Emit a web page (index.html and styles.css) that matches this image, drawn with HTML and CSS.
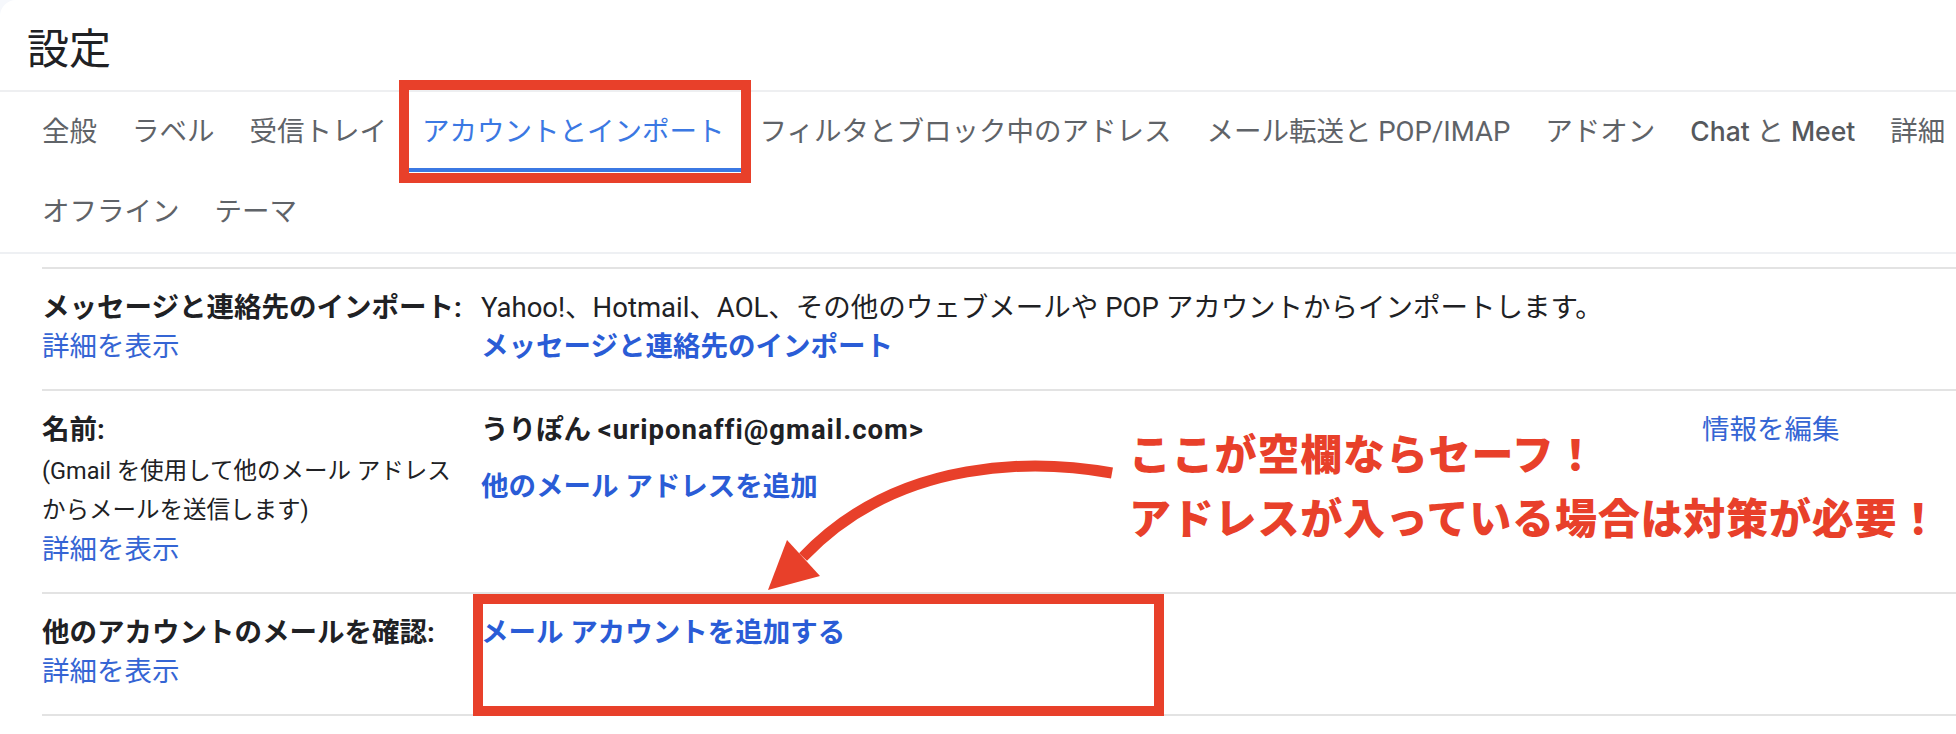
FILE: index.html
```html
<!DOCTYPE html>
<html lang="ja">
<head>
  <meta charset="UTF-8">
  <meta name="viewport" content="width=device-width, initial-scale=1.0">
  <title>設定 - アカウントとインポート</title>
  <link rel="stylesheet" href="styles.css">
</head>
<body>
  <div class="page">
    <div class="header">設定</div>

    <div class="tabs">
      <div class="tab-row">
        <div class="tab">全般</div>
        <div class="tab">ラベル</div>
        <div class="tab">受信トレイ</div>
        <div class="tab active">アカウントとインポート</div>
        <div class="tab">フィルタとブロック中のアドレス</div>
        <div class="tab">メール転送と POP/IMAP</div>
        <div class="tab">アドオン</div>
        <div class="tab"><span class="latin">Chat</span> と <span class="latin">Meet</span></div>
        <div class="tab">詳細</div>
      </div>
      <div class="tab-row">
        <div class="tab">オフライン</div>
        <div class="tab">テーマ</div>
      </div>
    </div>

    <div class="settings">
      <div class="setting-row">
        <div class="label">
          <div class="label-title">メッセージと連絡先のインポート:</div>
          <a class="link" href="#">詳細を表示</a>
        </div>
        <div class="value">
          <div>Yahoo!、Hotmail、AOL、その他のウェブメールや POP アカウントからインポートします。</div>
          <a class="link bold" href="#">メッセージと連絡先のインポート</a>
        </div>
      </div>

      <div class="setting-row">
        <div class="label">
          <div class="label-title spaced">名前:</div>
          <div class="note">(Gmail を使用して他のメール アドレス<br>からメールを送信します)</div>
          <a class="link" href="#">詳細を表示</a>
        </div>
        <div class="value">
          <div class="bold">うりぽん <span class="email">&lt;uriponaffi@gmail.com&gt;</span></div>
          <a class="link bold add-link" href="#">他のメール アドレスを追加</a>
        </div>
        <div class="edit">
          <a class="link" href="#">情報を編集</a>
        </div>
      </div>

      <div class="setting-row">
        <div class="label">
          <div class="label-title">他のアカウントのメールを確認:</div>
          <a class="link" href="#">詳細を表示</a>
        </div>
        <div class="value">
          <a class="link bold" href="#">メール アカウントを追加する</a>
        </div>
      </div>
    </div>

    <!-- annotations drawn over the screenshot -->
    <div class="mark mark-tab"></div>
    <div class="mark mark-check"></div>

    <svg class="arrow" width="1956" height="734" viewBox="0 0 1956 734">
      <path d="M1112 473 C1040 460 900 455 803 557" fill="none" stroke="#e8402a" stroke-width="11"/>
      <polygon points="768,590 787,540 820,576" fill="#e8402a"/>
    </svg>

    <div class="note-callout">
      ここが空欄ならセーフ！<br>
      アドレスが入っている場合は対策が必要！
    </div>
  </div>
</body>
</html>
```

FILE: styles.css
```css
body {
  margin: 0;
  background-color: #f6f8fc;
  font-family: Roboto, "Noto Sans CJK JP", sans-serif;
  color: #202124;
}
.page {
  position: relative;
  width: 1956px;
  height: 734px;
  overflow: hidden;
  background-color: #fff;
  border-top-left-radius: 16px;
}
.header {
  height: 90px;
  display: flex;
  align-items: center;
  padding-left: 27px;
  font-size: 42px;
  color: #202124;
  border-bottom: 2px solid #eeeff1;
}
.tabs {
  padding-left: 24.5px;
  border-bottom: 2px solid #eef0f3;
}
.tab-row {
  display: flex;
  white-space: nowrap;
}
.tab {
  height: 80px;
  box-sizing: border-box;
  padding: 0 17.5px;
  font-size: 27.5px;
  line-height: 79px;
  color: #5f6368;
  border-bottom: 4px solid transparent;
}
.tab .latin {
  font-family: Inter, Roboto, sans-serif;
  font-weight: 500;
  font-size: 26.5px;
  color: #55585c;
}
.tab.active {
  color: #3b78e3;
  border-bottom-color: #3b78e3;
}
.settings {
  margin-left: 42px;
  padding-top: 13px;
  font-size: 27.5px;
  line-height: 39px;
}
.setting-row {
  display: grid;
  grid-template-columns: 439px 1221px 1fr;
  padding: 19px 0 23px;
  border-top: 2px solid #e3e3e3;
}
.setting-row:last-child {
  border-bottom: 2px solid #e3e3e3;
}
.label-title {
  font-weight: 700;
  color: #202124;
}
.label-title.spaced {
  margin-bottom: 3px;
}
.note {
  font-size: 23.5px;
  color: #202124;
}
.link {
  display: block;
  color: #3565d4;
  text-decoration: none;
}
.bold {
  font-weight: 700;
}
.email {
  letter-spacing: 1px;
}
.link.bold {
  color: #2a5cd6;
}
.add-link {
  margin-top: 18px;
}
.mark {
  position: absolute;
  box-sizing: border-box;
  border: 10px solid #e8402a;
}
.mark-tab {
  left: 399px;
  top: 80px;
  width: 352px;
  height: 103px;
}
.mark-check {
  left: 473px;
  top: 594px;
  width: 691px;
  height: 122px;
}
.arrow {
  position: absolute;
  left: 0;
  top: 0;
}
.note-callout {
  position: absolute;
  left: 1129px;
  top: 420px;
  font-family: "Noto Sans CJK JP", sans-serif;
  font-size: 42px;
  font-weight: 900;
  line-height: 64px;
  letter-spacing: 0.8px;
  color: #e8402a;
  white-space: nowrap;
}
```
